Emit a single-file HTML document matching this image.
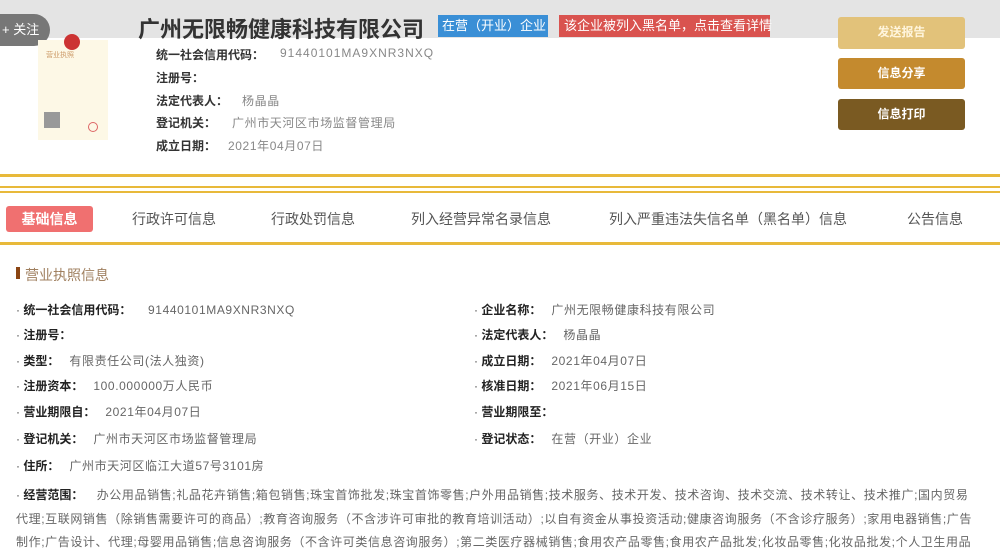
<!DOCTYPE html>
<html><head><meta charset="utf-8"><style>
*{margin:0;padding:0;box-sizing:border-box}
body{width:1000px;height:541px;overflow:hidden;background:#fff;font-family:"Liberation Sans","Noto Sans CJK SC",sans-serif;position:relative;color:#333}
.a{position:absolute;white-space:nowrap}
.top{position:absolute;left:0;top:0;width:1000px;height:38px;background:#e4e4e4}
.follow{position:absolute;left:0;top:14px;width:50px;height:32px;background:#777;border-radius:0 16px 16px 0;color:#fff;font-size:13px;line-height:32px;padding-left:2px}
.lic{position:absolute;left:38px;top:40px;width:70px;height:100px;background:#fdf8e6}
.k{font-size:12px;font-weight:bold;color:#333}
.v{font-size:12px;color:#888;letter-spacing:0.6px}
.line{position:absolute;left:0;width:1000px;background:#e8b93a}
.btn{position:absolute;left:838px;width:127px;height:31px;border-radius:3px;color:#fff;font-size:12px;font-weight:bold;text-align:center;line-height:31px}
.tab{position:absolute;top:209px;font-size:14px;color:#555}
.r{position:absolute;font-size:12px;color:#444;white-space:nowrap}
.r b{color:#222}
.r span{color:#666}
.s span{letter-spacing:0.6px}
</style></head><body>
<div class="top"></div>
<div class="follow">+ 关注</div>
<div class="lic">
<div style="position:absolute;left:26px;top:-6px;width:16px;height:16px;border-radius:50%;background:#c33"></div>
<div style="position:absolute;left:8px;top:10px;font-size:7px;color:#c96">营业执照</div>
<div style="position:absolute;left:6px;top:72px;width:16px;height:16px;background:#999"></div>
<div style="position:absolute;left:50px;top:82px;width:10px;height:10px;border-radius:50%;border:1px solid #d66"></div>
</div>
<div class="a" style="left:138px;top:12px;font-size:22px;font-weight:bold;color:#333">广州无限畅健康科技有限公司</div>
<div class="a" style="left:438px;top:15px;width:110px;height:22px;background:#3a8fd6;color:#fff;font-size:13px;line-height:22px;padding-left:4px">在营（开业）企业</div>
<div class="a" style="left:559px;top:15px;width:211px;height:22px;background:#d9534f;color:#fff;font-size:13px;line-height:22px;padding-left:5px">该企业被列入黑名单，点击查看详情</div>
<div class="a k" style="left:156px;top:46px">统一社会信用代码：</div><div class="a v" style="left:280px;top:46px;letter-spacing:1px">91440101MA9XNR3NXQ</div>
<div class="a k" style="left:156px;top:69px">注册号：</div>
<div class="a k" style="left:156px;top:92px">法定代表人：</div><div class="a v" style="left:242px;top:92px">杨晶晶</div>
<div class="a k" style="left:156px;top:114px">登记机关：</div><div class="a v" style="left:232px;top:114px">广州市天河区市场监督管理局</div>
<div class="a k" style="left:156px;top:137px">成立日期：</div><div class="a v" style="left:228px;top:137px">2021年04月07日</div>
<div class="btn" style="top:17px;height:32px;background:#e2c27a;color:#fff5dd">发送报告</div>
<div class="btn" style="top:58px;background:#c48a2e">信息分享</div>
<div class="btn" style="top:99px;background:#7a5a22">信息打印</div>
<div class="line" style="top:174px;height:3px"></div>
<div class="line" style="top:186px;height:2px"></div>
<div class="line" style="top:191px;height:2px"></div>
<div class="line" style="top:242px;height:3px"></div>
<div class="a" style="left:6px;top:206px;width:87px;height:26px;background:#f07070;border-radius:3px;color:#fff;font-size:14px;font-weight:bold;text-align:center;line-height:26px">基础信息</div>
<div class="tab" style="left:132px">行政许可信息</div>
<div class="tab" style="left:271px">行政处罚信息</div>
<div class="tab" style="left:411px">列入经营异常名录信息</div>
<div class="tab" style="left:609px">列入严重违法失信名单（黑名单）信息</div>
<div class="tab" style="left:907px">公告信息</div>
<div class="a" style="left:16px;top:267px;width:4px;height:12px;background:#8b4513"></div>
<div class="a" style="left:25px;top:265px;font-size:14px;color:#a08060">营业执照信息</div>
<div class="r s" style="left:16px;top:301px">· <b>统一社会信用代码：</b>&nbsp;&nbsp;&nbsp;&nbsp;&nbsp;<span>91440101MA9XNR3NXQ</span></div>
<div class="r" style="left:16px;top:326px">· <b>注册号：</b></div>
<div class="r s" style="left:16px;top:352px">· <b>类型：</b>&nbsp;&nbsp;&nbsp;<span>有限责任公司(法人独资)</span></div>
<div class="r s" style="left:16px;top:377px">· <b>注册资本：</b>&nbsp;&nbsp;&nbsp;<span>100.000000万人民币</span></div>
<div class="r s" style="left:16px;top:403px">· <b>营业期限自：</b>&nbsp;&nbsp;&nbsp;<span>2021年04月07日</span></div>
<div class="r s" style="left:16px;top:430px">· <b>登记机关：</b>&nbsp;&nbsp;&nbsp;<span>广州市天河区市场监督管理局</span></div>
<div class="r s" style="left:16px;top:457px">· <b>住所：</b>&nbsp;&nbsp;&nbsp;<span>广州市天河区临江大道57号3101房</span></div>
<div class="r s" style="left:474px;top:301px">· <b>企业名称：</b>&nbsp;&nbsp;&nbsp;<span>广州无限畅健康科技有限公司</span></div>
<div class="r s" style="left:474px;top:326px">· <b>法定代表人：</b>&nbsp;&nbsp;&nbsp;<span>杨晶晶</span></div>
<div class="r s" style="left:474px;top:352px">· <b>成立日期：</b>&nbsp;&nbsp;&nbsp;<span>2021年04月07日</span></div>
<div class="r s" style="left:474px;top:377px">· <b>核准日期：</b>&nbsp;&nbsp;&nbsp;<span>2021年06月15日</span></div>
<div class="r" style="left:474px;top:403px">· <b>营业期限至：</b></div>
<div class="r s" style="left:474px;top:430px">· <b>登记状态：</b>&nbsp;&nbsp;&nbsp;<span>在营（开业）企业</span></div>
<div class="r s" style="left:16px;top:486px">· <b>经营范围：</b>&nbsp;&nbsp;&nbsp;&nbsp;<span>办公用品销售;礼品花卉销售;箱包销售;珠宝首饰批发;珠宝首饰零售;户外用品销售;技术服务、技术开发、技术咨询、技术交流、技术转让、技术推广;国内贸易</span></div>
<div class="r s" style="left:16px;top:510px"><span>代理;互联网销售（除销售需要许可的商品）;教育咨询服务（不含涉许可审批的教育培训活动）;以自有资金从事投资活动;健康咨询服务（不含诊疗服务）;家用电器销售;广告</span></div>
<div class="r s" style="left:16px;top:533px"><span>制作;广告设计、代理;母婴用品销售;信息咨询服务（不含许可类信息咨询服务）;第二类医疗器械销售;食用农产品零售;食用农产品批发;化妆品零售;化妆品批发;个人卫生用品</span></div>
</body></html>
